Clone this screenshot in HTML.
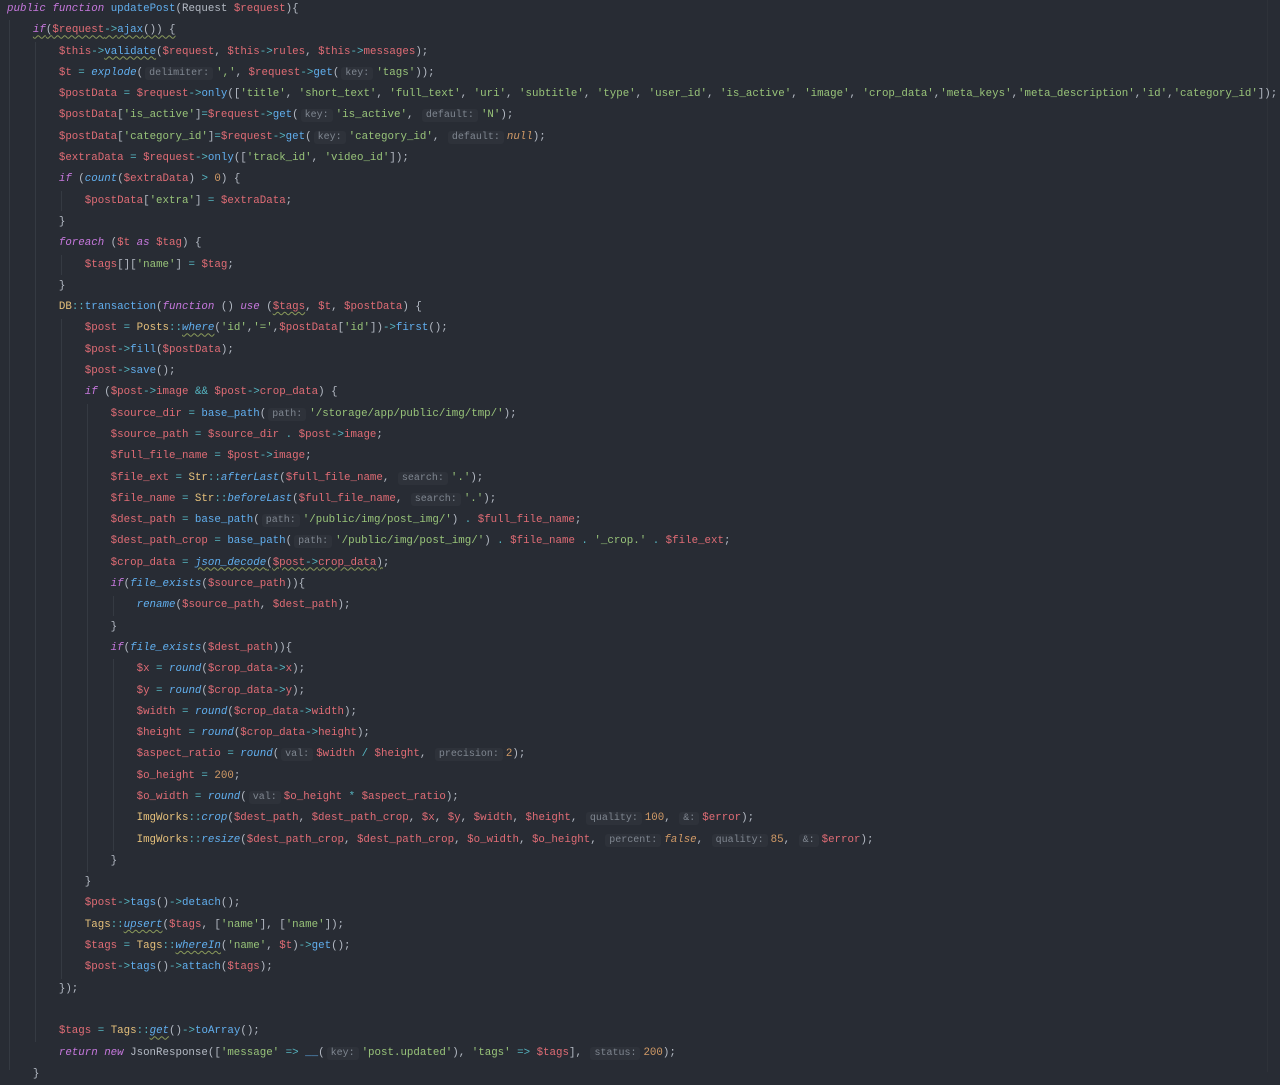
<!DOCTYPE html>
<html><head><meta charset="utf-8">
<style>
html,body{margin:0;padding:0;background:#282c34;width:1280px;height:1072px;overflow:hidden}
#code{position:absolute;left:7px;top:-1px;font-family:"Liberation Mono","DejaVu Sans Mono",monospace;font-size:10.8px;line-height:21.29px;color:#b4bac4;white-space:pre}
.k{color:#c678dd;font-style:italic}
.f{color:#61afef}
.fi{color:#61afef;font-style:italic}
.v{color:#e06c75}
.s{color:#98c379}
.c{color:#e5c07b}
.o{color:#56b6c2}
.n{color:#d19a66}
.ni{color:#d19a66;font-style:italic}
.h{color:#7f8690;background:#2e323a;font-size:10px;padding:1px 4px;border-radius:3px;margin:0 3px 0 2px}
.w{text-decoration:underline wavy #8a9a5a;text-decoration-thickness:1px;text-underline-offset:2px}
.g{position:absolute;width:1px;background:#353a42}
</style></head><body>
<div class="g" style="left:9px;top:20px;height:1050px"></div>
<div class="g" style="left:35px;top:42px;height:1000px"></div>
<div class="g" style="left:61px;top:191px;height:20px"></div>
<div class="g" style="left:61px;top:255px;height:20px"></div>
<div class="g" style="left:61px;top:319px;height:660px"></div>
<div class="g" style="left:87px;top:404px;height:468px"></div>
<div class="g" style="left:113px;top:596px;height:20px"></div>
<div class="g" style="left:113px;top:659px;height:192px"></div>
<div class="g" style="left:1267px;top:0;height:1072px;background:#2e3239"></div>
<div id="code"><span class="k">public function</span> <span class="f">updatePost</span>(Request <span class="v">$request</span>){
    <span class="w"><span class="k">if</span>(<span class="v">$request</span><span class="o">-&gt;</span><span class="f">ajax</span>()) {</span>
        <span class="v">$this</span><span class="o">-&gt;</span><span class="f w">validate</span>(<span class="v">$request</span>, <span class="v">$this</span><span class="o">-&gt;</span><span class="v">rules</span>, <span class="v">$this</span><span class="o">-&gt;</span><span class="v">messages</span>);
        <span class="v">$t</span> <span class="o">=</span> <span class="fi">explode</span>(<span class="h">delimiter:</span><span class="s">','</span>, <span class="v">$request</span><span class="o">-&gt;</span><span class="f">get</span>(<span class="h">key:</span><span class="s">'tags'</span>));
        <span class="v">$postData</span> <span class="o">=</span> <span class="v">$request</span><span class="o">-&gt;</span><span class="f">only</span>([<span class="s">'title'</span>, <span class="s">'short_text'</span>, <span class="s">'full_text'</span>, <span class="s">'uri'</span>, <span class="s">'subtitle'</span>, <span class="s">'type'</span>, <span class="s">'user_id'</span>, <span class="s">'is_active'</span>, <span class="s">'image'</span>, <span class="s">'crop_data'</span>,<span class="s">'meta_keys'</span>,<span class="s">'meta_description'</span>,<span class="s">'id'</span>,<span class="s">'category_id'</span>]);
        <span class="v">$postData</span>[<span class="s">'is_active'</span>]<span class="o">=</span><span class="v">$request</span><span class="o">-&gt;</span><span class="f">get</span>(<span class="h">key:</span><span class="s">'is_active'</span>, <span class="h">default:</span><span class="s">'N'</span>);
        <span class="v">$postData</span>[<span class="s">'category_id'</span>]<span class="o">=</span><span class="v">$request</span><span class="o">-&gt;</span><span class="f">get</span>(<span class="h">key:</span><span class="s">'category_id'</span>, <span class="h">default:</span><span class="ni">null</span>);
        <span class="v">$extraData</span> <span class="o">=</span> <span class="v">$request</span><span class="o">-&gt;</span><span class="f">only</span>([<span class="s">'track_id'</span>, <span class="s">'video_id'</span>]);
        <span class="k">if</span> (<span class="fi">count</span>(<span class="v">$extraData</span>) <span class="o">&gt;</span> <span class="n">0</span>) {
            <span class="v">$postData</span>[<span class="s">'extra'</span>] <span class="o">=</span> <span class="v">$extraData</span>;
        }
        <span class="k">foreach</span> (<span class="v">$t</span> <span class="k">as</span> <span class="v">$tag</span>) {
            <span class="v">$tags</span>[][<span class="s">'name'</span>] <span class="o">=</span> <span class="v">$tag</span>;
        }
        <span class="c">DB</span><span class="o">::</span><span class="f">transaction</span>(<span class="k">function</span> () <span class="k">use</span> (<span class="v w">$tags</span>, <span class="v">$t</span>, <span class="v">$postData</span>) {
            <span class="v">$post</span> <span class="o">=</span> <span class="c">Posts</span><span class="o">::</span><span class="fi w">where</span>(<span class="s">'id'</span>,<span class="s">'='</span>,<span class="v">$postData</span>[<span class="s">'id'</span>])<span class="o">-&gt;</span><span class="f">first</span>();
            <span class="v">$post</span><span class="o">-&gt;</span><span class="f">fill</span>(<span class="v">$postData</span>);
            <span class="v">$post</span><span class="o">-&gt;</span><span class="f">save</span>();
            <span class="k">if</span> (<span class="v">$post</span><span class="o">-&gt;</span><span class="v">image</span> <span class="o">&amp;&amp;</span> <span class="v">$post</span><span class="o">-&gt;</span><span class="v">crop_data</span>) {
                <span class="v">$source_dir</span> <span class="o">=</span> <span class="f">base_path</span>(<span class="h">path:</span><span class="s">'/storage/app/public/img/tmp/'</span>);
                <span class="v">$source_path</span> <span class="o">=</span> <span class="v">$source_dir</span> <span class="o">.</span> <span class="v">$post</span><span class="o">-&gt;</span><span class="v">image</span>;
                <span class="v">$full_file_name</span> <span class="o">=</span> <span class="v">$post</span><span class="o">-&gt;</span><span class="v">image</span>;
                <span class="v">$file_ext</span> <span class="o">=</span> <span class="c">Str</span><span class="o">::</span><span class="fi">afterLast</span>(<span class="v">$full_file_name</span>, <span class="h">search:</span><span class="s">'.'</span>);
                <span class="v">$file_name</span> <span class="o">=</span> <span class="c">Str</span><span class="o">::</span><span class="fi">beforeLast</span>(<span class="v">$full_file_name</span>, <span class="h">search:</span><span class="s">'.'</span>);
                <span class="v">$dest_path</span> <span class="o">=</span> <span class="f">base_path</span>(<span class="h">path:</span><span class="s">'/public/img/post_img/'</span>) <span class="o">.</span> <span class="v">$full_file_name</span>;
                <span class="v">$dest_path_crop</span> <span class="o">=</span> <span class="f">base_path</span>(<span class="h">path:</span><span class="s">'/public/img/post_img/'</span>) <span class="o">.</span> <span class="v">$file_name</span> <span class="o">.</span> <span class="s">'_crop.'</span> <span class="o">.</span> <span class="v">$file_ext</span>;
                <span class="v">$crop_data</span> <span class="o">=</span> <span class="w"><span class="fi">json_decode</span>(<span class="v">$post</span><span class="o">-&gt;</span><span class="v">crop_data</span>)</span>;
                <span class="k">if</span>(<span class="fi">file_exists</span>(<span class="v">$source_path</span>)){
                    <span class="fi">rename</span>(<span class="v">$source_path</span>, <span class="v">$dest_path</span>);
                }
                <span class="k">if</span>(<span class="fi">file_exists</span>(<span class="v">$dest_path</span>)){
                    <span class="v">$x</span> <span class="o">=</span> <span class="fi">round</span>(<span class="v">$crop_data</span><span class="o">-&gt;</span><span class="v">x</span>);
                    <span class="v">$y</span> <span class="o">=</span> <span class="fi">round</span>(<span class="v">$crop_data</span><span class="o">-&gt;</span><span class="v">y</span>);
                    <span class="v">$width</span> <span class="o">=</span> <span class="fi">round</span>(<span class="v">$crop_data</span><span class="o">-&gt;</span><span class="v">width</span>);
                    <span class="v">$height</span> <span class="o">=</span> <span class="fi">round</span>(<span class="v">$crop_data</span><span class="o">-&gt;</span><span class="v">height</span>);
                    <span class="v">$aspect_ratio</span> <span class="o">=</span> <span class="fi">round</span>(<span class="h">val:</span><span class="v">$width</span> <span class="o">/</span> <span class="v">$height</span>, <span class="h">precision:</span><span class="n">2</span>);
                    <span class="v">$o_height</span> <span class="o">=</span> <span class="n">200</span>;
                    <span class="v">$o_width</span> <span class="o">=</span> <span class="fi">round</span>(<span class="h">val:</span><span class="v">$o_height</span> <span class="o">*</span> <span class="v">$aspect_ratio</span>);
                    <span class="c">ImgWorks</span><span class="o">::</span><span class="fi">crop</span>(<span class="v">$dest_path</span>, <span class="v">$dest_path_crop</span>, <span class="v">$x</span>, <span class="v">$y</span>, <span class="v">$width</span>, <span class="v">$height</span>, <span class="h">quality:</span><span class="n">100</span>, <span class="h">&amp;:</span><span class="v">$error</span>);
                    <span class="c">ImgWorks</span><span class="o">::</span><span class="fi">resize</span>(<span class="v">$dest_path_crop</span>, <span class="v">$dest_path_crop</span>, <span class="v">$o_width</span>, <span class="v">$o_height</span>, <span class="h">percent:</span><span class="ni">false</span>, <span class="h">quality:</span><span class="n">85</span>, <span class="h">&amp;:</span><span class="v">$error</span>);
                }
            }
            <span class="v">$post</span><span class="o">-&gt;</span><span class="f">tags</span>()<span class="o">-&gt;</span><span class="f">detach</span>();
            <span class="c">Tags</span><span class="o">::</span><span class="fi w">upsert</span>(<span class="v">$tags</span>, [<span class="s">'name'</span>], [<span class="s">'name'</span>]);
            <span class="v">$tags</span> <span class="o">=</span> <span class="c">Tags</span><span class="o">::</span><span class="fi w">whereIn</span>(<span class="s">'name'</span>, <span class="v">$t</span>)<span class="o">-&gt;</span><span class="f">get</span>();
            <span class="v">$post</span><span class="o">-&gt;</span><span class="f">tags</span>()<span class="o">-&gt;</span><span class="f">attach</span>(<span class="v">$tags</span>);
        });

        <span class="v">$tags</span> <span class="o">=</span> <span class="c">Tags</span><span class="o">::</span><span class="fi w">get</span>()<span class="o">-&gt;</span><span class="f">toArray</span>();
        <span class="k">return new</span> JsonResponse([<span class="s">'message'</span> <span class="o">=&gt;</span> <span class="f">__</span>(<span class="h">key:</span><span class="s">'post.updated'</span>), <span class="s">'tags'</span> <span class="o">=&gt;</span> <span class="v">$tags</span>], <span class="h">status:</span><span class="n">200</span>);
    }
</div>
</body></html>
